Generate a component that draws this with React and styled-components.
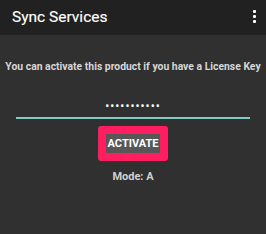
import React from "react";
import styled, { createGlobalStyle } from "styled-components";

const Global = createGlobalStyle`
  html, body { margin: 0; padding: 0; background: #303030; }
  body { font-family: Roboto, "Liberation Sans", sans-serif; }
`;

const Screen = styled.div`
  width: 266px;
  height: 234px;
  background: #303030;
  display: flex;
  flex-direction: column;
`;

const AppBar = styled.div`
  height: 35px;
  background: #212121;
  display: flex;
  align-items: center;
  justify-content: space-between;
  padding: 0 10px 0 12px;
  box-sizing: border-box;
`;

const Title = styled.div`
  color: #fff;
  font-size: 15.5px;
  font-weight: 400;
  margin-top: -2px;
  -webkit-text-stroke: 0.15px #fff;
`;

const Kebab = styled.div`
  display: flex;
  flex-direction: column;
  gap: 2px;
  margin-top: -3px;
  span {
    width: 3px;
    height: 3px;
    background: #fff;
    border-radius: 1px;
  }
`;

const Body = styled.div`
  display: flex;
  flex-direction: column;
  align-items: center;
  padding-top: 25px;
`;

const Info = styled.div`
  color: #d6d6d6;
  font-size: 10.4px;
  font-weight: 700;
  white-space: nowrap;
`;

const Field = styled.div`
  width: 234px;
  margin-top: 22px;
  border-bottom: 2px solid #80cbc4;
  color: #fff;
  text-align: center;
  font-size: 12px;
  height: 22px;
  line-height: 23px;
  letter-spacing: 1px;
`;

const Highlight = styled.div`
  margin-top: 7px;
  border: 8px solid #ff1e5f;
  border-radius: 3px;
`;

const Button = styled.button`
  display: block;
  width: 54px;
  height: 19px;
  padding: 0;
  border: none;
  background: #575757;
  color: #fff;
  font-family: Roboto, "Liberation Sans", sans-serif;
  font-size: 11px;
  font-weight: 700;
`;

const Mode = styled.div`
  margin-top: 9px;
  color: #cfcfcf;
  font-size: 11px;
  font-weight: 700;
`;

export default function App() {
  return (
    <>
      <Global />
      <Screen>
        <AppBar>
          <Title>Sync Services</Title>
          <Kebab>
            <span />
            <span />
            <span />
          </Kebab>
        </AppBar>
        <Body>
          <Info>You can activate this product if you have a License Key</Info>
          <Field>•••••••••••</Field>
          <Highlight>
            <Button>ACTIVATE</Button>
          </Highlight>
          <Mode>Mode: A</Mode>
        </Body>
      </Screen>
    </>
  );
}
